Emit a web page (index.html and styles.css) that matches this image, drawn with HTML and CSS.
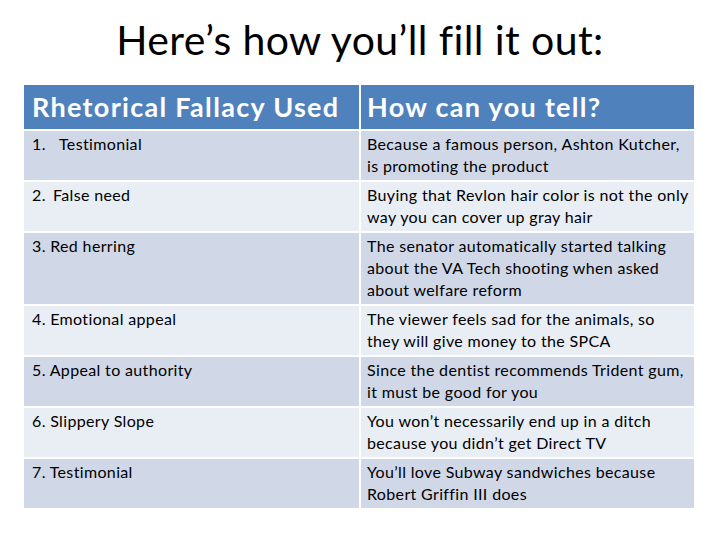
FILE: index.html
```html
<!DOCTYPE html>
<html>
<head>
<meta charset="utf-8">
<link rel="stylesheet" href="styles.css">
</head>
<body>
<div class="slide">
  <h1 class="title">Here’s how you’ll fill it out:</h1>
  <div class="grid">
    <div class="cell head">Rhetorical Fallacy Used</div>
    <div class="cell head">How can you tell?</div>

    <div class="cell odd"><span class="num1">1.</span>Testimonial</div>
    <div class="cell odd">Because a famous person, Ashton Kutcher,<br>is promoting the product</div>

    <div class="cell even"><span class="num2">2.</span>False need</div>
    <div class="cell even">Buying that Revlon hair color is not the only<br>way you can cover up gray hair</div>

    <div class="cell odd">3. Red herring</div>
    <div class="cell odd">The senator automatically started talking<br>about the VA Tech shooting when asked<br>about welfare reform</div>

    <div class="cell even">4. Emotional appeal</div>
    <div class="cell even">The viewer feels sad for the animals, so<br>they will give money to the SPCA</div>

    <div class="cell odd">5. Appeal to authority</div>
    <div class="cell odd">Since the dentist recommends Trident gum,<br>it must be good for you</div>

    <div class="cell even">6. Slippery Slope</div>
    <div class="cell even">You won’t necessarily end up in a ditch<br>because you didn’t get Direct TV</div>

    <div class="cell odd">7. Testimonial</div>
    <div class="cell odd">You’ll love Subway sandwiches because<br>Robert Griffin III does</div>
  </div>
</div>
</body>
</html>
```
FILE: styles.css
```css
html, body {
  margin: 0;
  padding: 0;
  background: #ffffff;
}
.slide {
  width: 720px;
  height: 540px;
  font-family: "Lato", "Liberation Sans", sans-serif;
  color: #000;
}
.title {
  margin: 0;
  padding-top: 14px;
  height: 85px;
  box-sizing: border-box;
  text-align: center;
  font-weight: normal;
  font-size: 41px;
  letter-spacing: 0.4px;
  line-height: 52px;
}
.grid {
  margin-left: 24px;
  width: 670px;
  display: grid;
  grid-template-columns: 335px 333px;
  column-gap: 2px;
  row-gap: 2px;
}
.cell {
  font-size: 16px;
  letter-spacing: 0.35px;
  line-height: 22px;
  padding: 2px 2px 3px 6px;
}
.head {
  background: #4f81bd;
  color: #fff;
  font-weight: bold;
  font-size: 27px;
  letter-spacing: 1.3px;
  line-height: 44px;
  padding: 0 4px 0 6px;
  height: 44px;
}
.odd { background: #d0d8e8; }
.even { background: #e9edf4; }
.grid > .cell:nth-child(odd) { padding-left: 8px; }
.num1 { display: inline-block; width: 27px; }
.num2 { display: inline-block; width: 21px; }
```
